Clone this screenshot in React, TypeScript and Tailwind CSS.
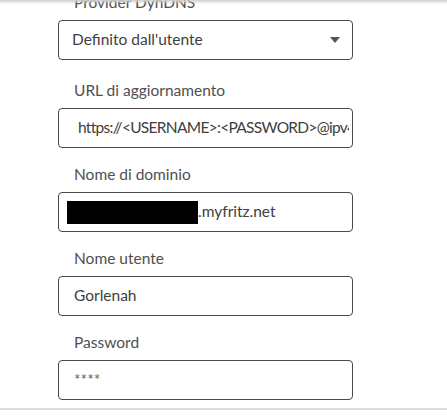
export default function App() {
  const font = { fontFamily: "Lato, 'Open Sans', sans-serif" };

  return (
    <div
      className="relative w-[447px] h-[416px] overflow-hidden bg-white text-[15.5px]"
      style={font}
    >
      {/* shadow of the header above */}
      <div className="absolute top-0 left-0 w-full h-[4px] bg-gradient-to-b from-[#cfcfcf] to-transparent" />

      <div className="flex flex-col w-[295px] ml-[58px] -mt-[8px]">
        <label className="pl-[16px] mb-[8px] leading-[20px] text-[#505050]">Provider DynDNS</label>
        <div className="flex items-center justify-between h-[40px] mb-[4px] border border-[#4a4a4a] rounded-[4px] pl-[13px] pr-[12px] text-[#404040]">
          <span>Definito dall'utente</span>
          <svg width="10" height="6" viewBox="0 0 10 6">
            <path d="M0 0h10L5 6z" fill="#555" />
          </svg>
        </div>

        <label className="pl-[16px] mt-[16px] mb-[8px] leading-[20px] text-[#505050]">URL di aggiornamento</label>
        <div className="flex items-center h-[40px] border border-[#4a4a4a] rounded-[4px] pl-[19px] pr-[3px] text-[#404040] overflow-hidden">
          <span className="whitespace-nowrap overflow-hidden tracking-[-0.7px]">https://&lt;USERNAME&gt;:&lt;PASSWORD&gt;@ipv4.example.dyndns/update?hostname=&lt;DOMAIN&gt;</span>
        </div>

        <label className="pl-[16px] mt-[16px] mb-[8px] leading-[20px] text-[#505050]">Nome di dominio</label>
        <div className="flex items-center h-[40px] border border-[#4a4a4a] rounded-[4px] pl-[8px] text-[#404040]">
          <div className="w-[131px] h-[23px] bg-black" />
          <span>.myfritz.net</span>
        </div>

        <label className="pl-[16px] mt-[16px] mb-[8px] leading-[20px] text-[#505050]">Nome utente</label>
        <div className="flex items-center h-[40px] border border-[#4a4a4a] rounded-[4px] pl-[15px] text-[#404040]">
          <span>Gorlenah</span>
        </div>

        <label className="pl-[16px] mt-[16px] mb-[8px] leading-[20px] text-[#505050]">Password</label>
        <div className="flex items-center h-[40px] border border-[#4a4a4a] rounded-[4px] pl-[15px] text-[#666666]">
          <span>****</span>
        </div>
      </div>

      <div className="mt-[8px] h-[2px] w-full bg-[#dcdcdc]" />
    </div>
  );
}
